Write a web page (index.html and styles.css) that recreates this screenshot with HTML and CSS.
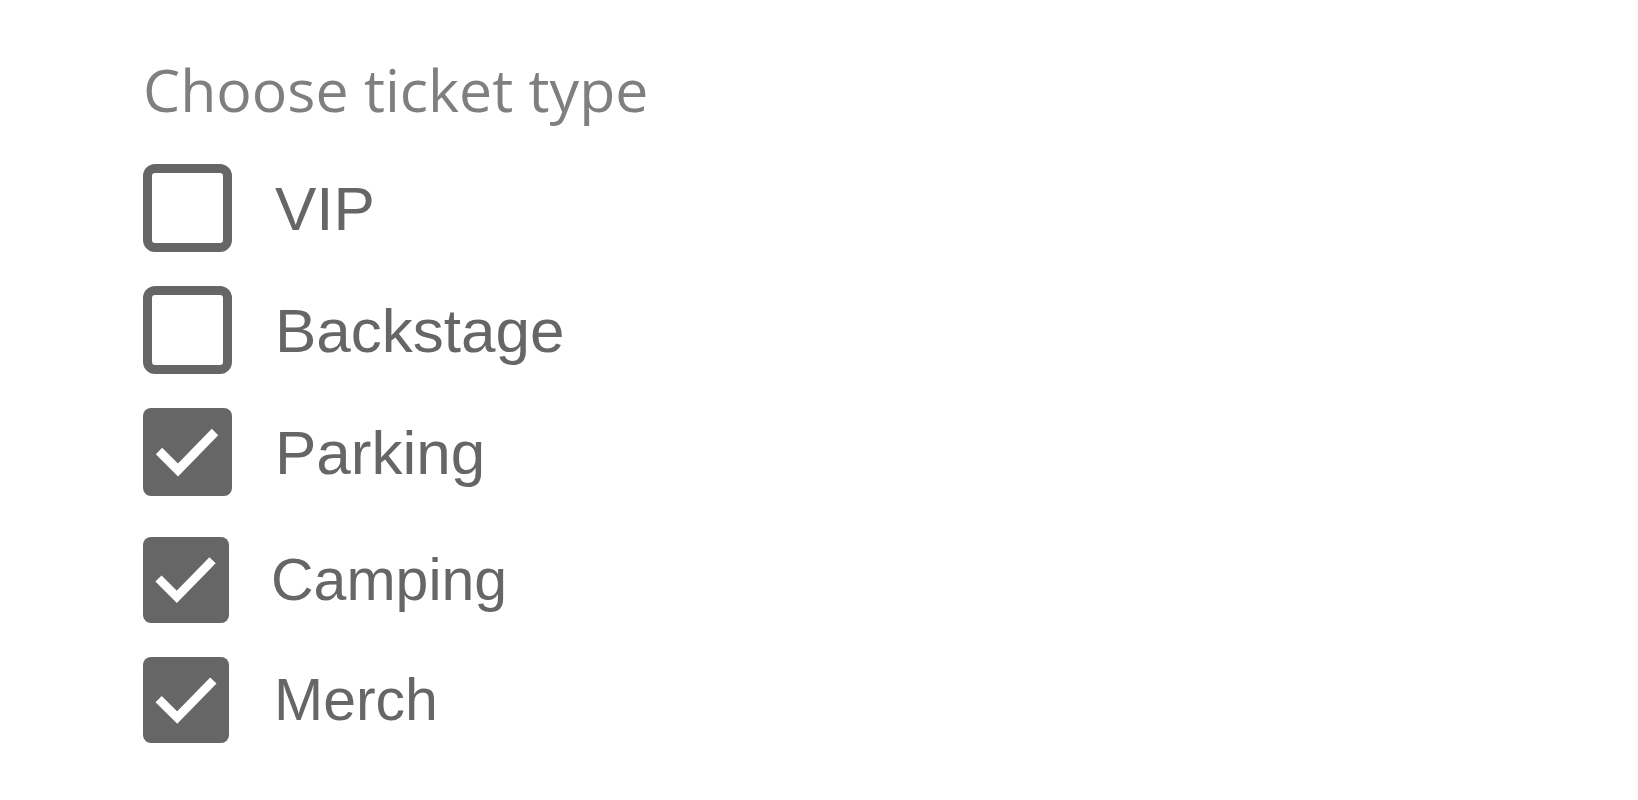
FILE: index.html
```html
<!DOCTYPE html>
<html lang="en">
<head>
<meta charset="utf-8">
<title>Choose ticket type</title>
<link rel="stylesheet" href="styles.css">
</head>
<body>
<main class="page">
  <h1 class="title">Choose ticket type</h1>
  <ul class="options">
    <li class="option">
      <span class="box"></span>
      <span class="label">VIP</span>
    </li>
    <li class="option">
      <span class="box"></span>
      <span class="label">Backstage</span>
    </li>
    <li class="option">
      <span class="box box-checked">
        <svg viewBox="0 0 88 88" width="88" height="88"><polyline points="16,43 35,62 72,24" fill="none" stroke="#fff" stroke-width="9"/></svg>
      </span>
      <span class="label">Parking</span>
    </li>
    <li class="option option-sm option-spaced">
      <span class="box box-checked">
        <svg viewBox="0 0 88 88" width="85" height="85"><polyline points="16,43 35,62 72,24" fill="none" stroke="#fff" stroke-width="9"/></svg>
      </span>
      <span class="label">Camping</span>
    </li>
    <li class="option option-sm">
      <span class="box box-checked">
        <svg viewBox="0 0 88 88" width="86" height="86"><polyline points="16,43 35,62 72,24" fill="none" stroke="#fff" stroke-width="9"/></svg>
      </span>
      <span class="label label-merch">Merch</span>
    </li>
  </ul>
</main>
</body>
</html>
```

FILE: styles.css
```css
html, body {
  margin: 0;
  padding: 0;
  background: #ffffff;
}

.page {
  padding: 0 0 0 143px;
}

.title {
  margin: 0;
  padding-top: 51px;
  font-family: "Open Sans", "Liberation Sans", sans-serif;
  font-weight: 400;
  font-size: 59px;
  line-height: 76px;
  color: #7f7f7f;
}

.options {
  list-style: none;
  margin: 0;
  padding: 0;
  padding-top: 37px;
  display: flex;
  flex-direction: column;
  gap: 34px;
}

.option {
  display: flex;
  align-items: center;
}

.option-spaced {
  margin-top: 7px;
}

.box {
  box-sizing: border-box;
  width: 89px;
  height: 88px;
  border: 9px solid #666666;
  border-radius: 12px;
  background: #ffffff;
  flex: none;
}

.box-checked {
  border: none;
  background: #666666;
  border-radius: 8px;
  display: block;
}

.box-checked svg {
  display: block;
}

.label {
  margin-left: 43px;
  font-family: "Liberation Sans", Arial, sans-serif;
  font-size: 62px;
  color: #666666;
}

.option-sm .box {
  width: 86px;
  height: 86px;
}

.option-sm .label {
  margin-left: 42px;
  font-size: 59px;
}

.option-sm .label-merch {
  margin-left: 45px;
}
```
